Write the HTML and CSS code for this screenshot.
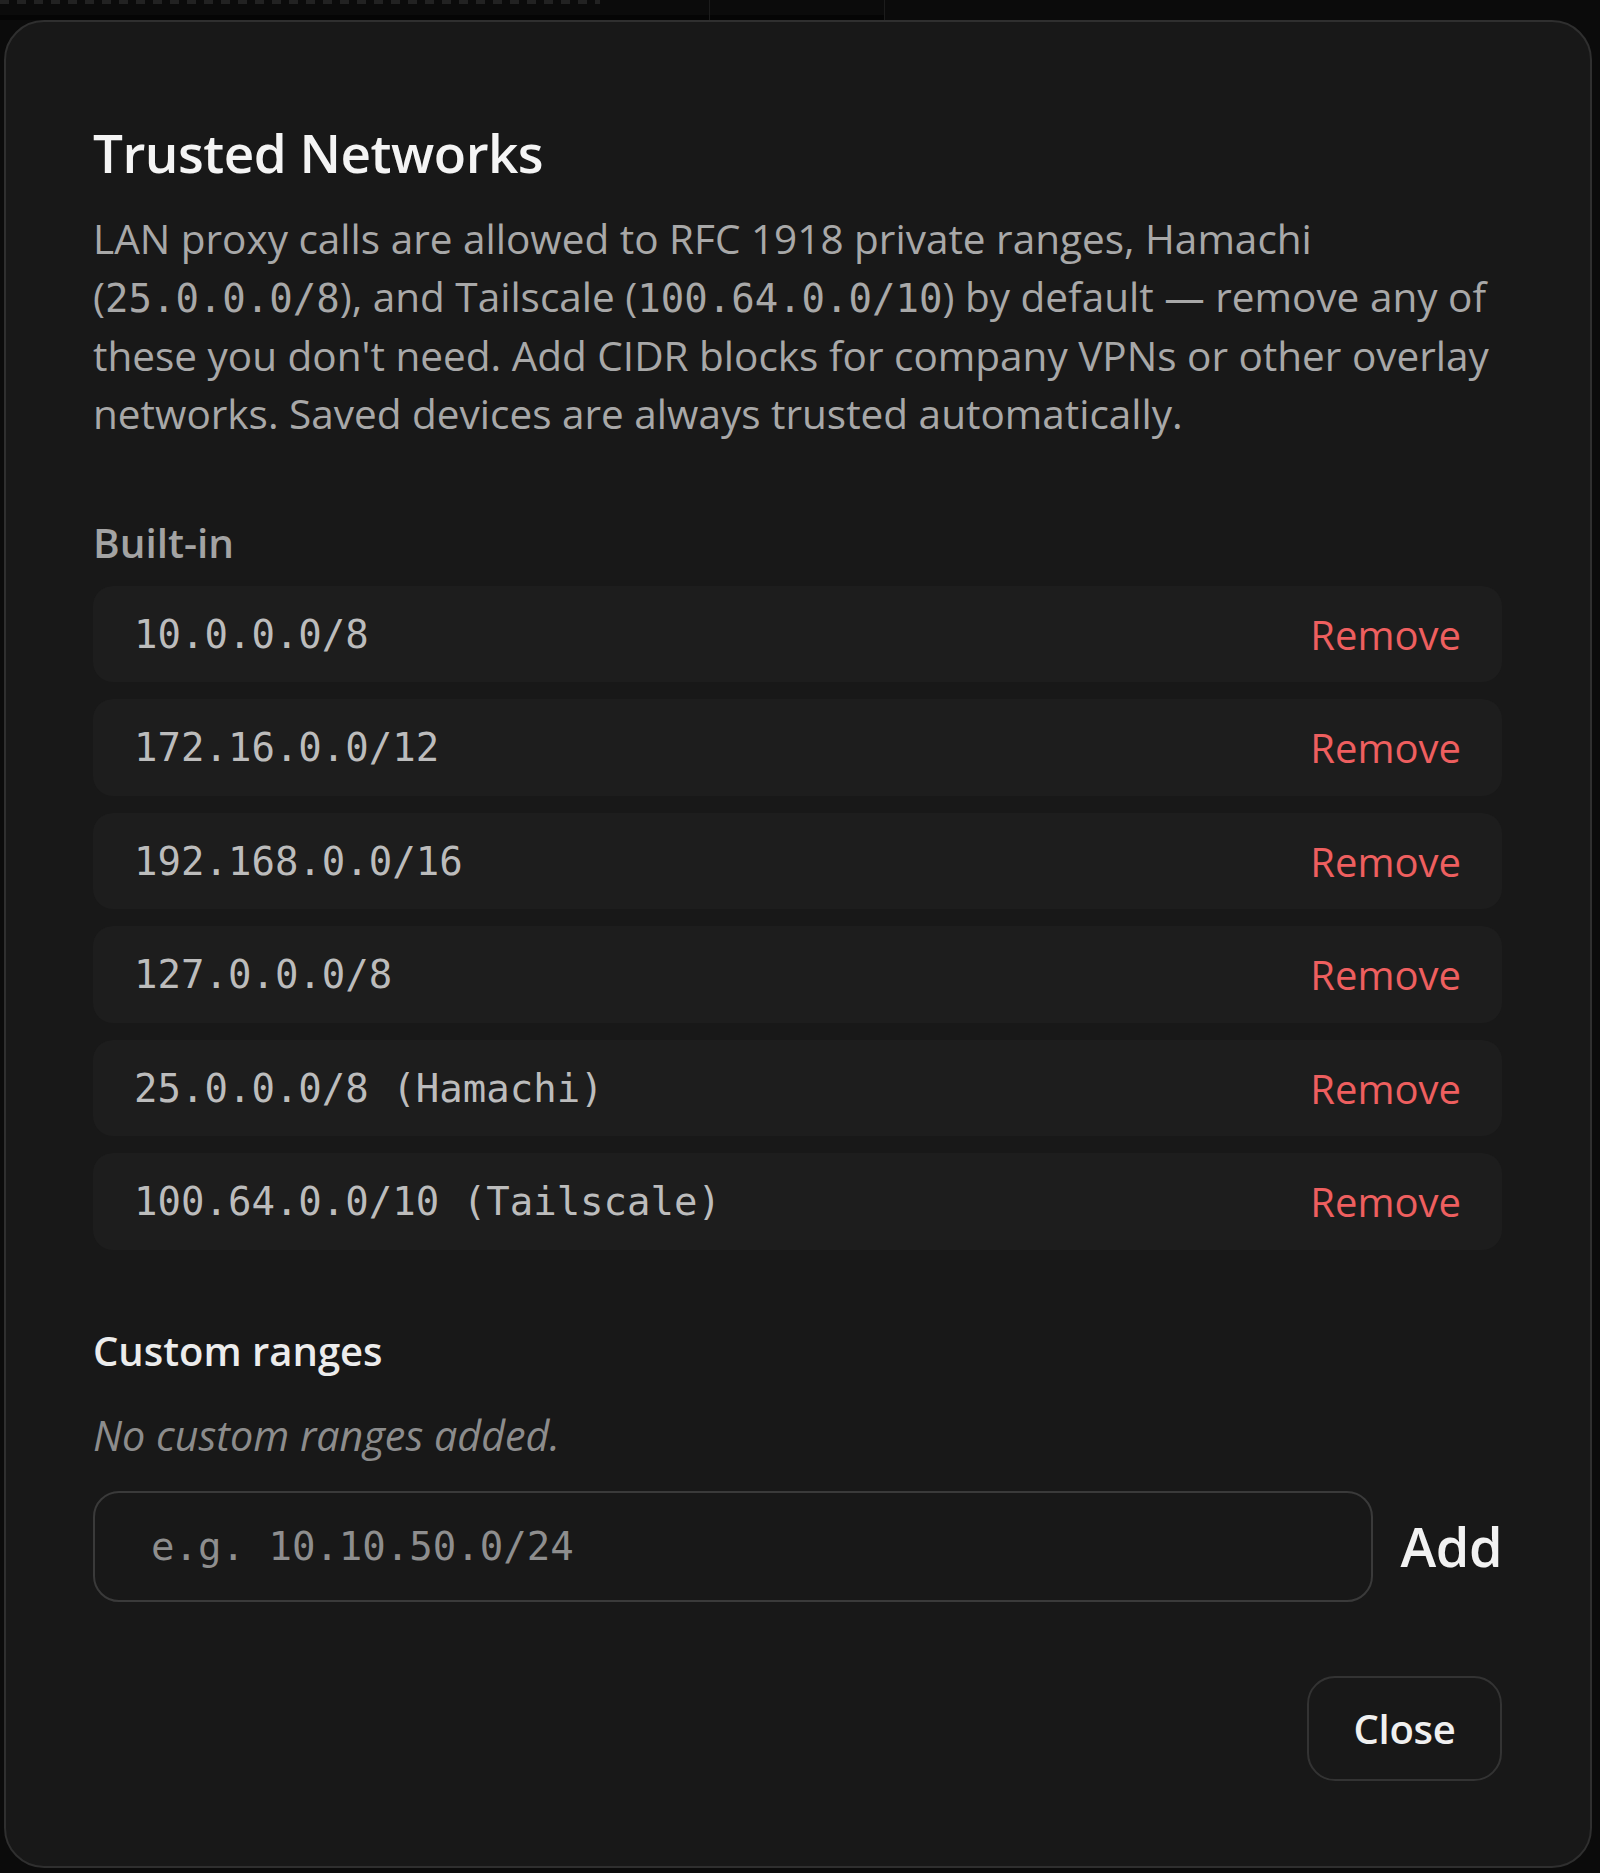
FILE: index.html
```html
<!DOCTYPE html>
<html lang="en">
<head>
<meta charset="utf-8">
<title>Trusted Networks</title>
<link rel="stylesheet" href="styles.css">
</head>
<body>
<div class="strip">
  <div class="strip-a"></div>
  <div class="strip-b"></div>
  <div class="strip-c"></div>
</div>
<div class="modal">
  <h2 class="title">Trusted Networks</h2>
  <p class="desc">LAN proxy calls are allowed to RFC 1918 private ranges, Hamachi (<code>25.0.0.0/8</code>), and Tailscale (<code>100.64.0.0/10</code>) by default — remove any of these you don't need. Add CIDR blocks for company VPNs or other overlay networks. Saved devices are always trusted automatically.</p>

  <div class="label">Built-in</div>
  <ul class="list">
    <li class="row"><span class="cidr">10.0.0.0/8</span><button class="remove">Remove</button></li>
    <li class="row"><span class="cidr">172.16.0.0/12</span><button class="remove">Remove</button></li>
    <li class="row"><span class="cidr">192.168.0.0/16</span><button class="remove">Remove</button></li>
    <li class="row"><span class="cidr">127.0.0.0/8</span><button class="remove">Remove</button></li>
    <li class="row"><span class="cidr">25.0.0.0/8 (Hamachi)</span><button class="remove">Remove</button></li>
    <li class="row"><span class="cidr">100.64.0.0/10 (Tailscale)</span><button class="remove">Remove</button></li>
  </ul>

  <div class="heading">Custom ranges</div>
  <p class="empty">No custom ranges added.</p>
  <div class="add-row">
    <input class="input" type="text" placeholder="e.g. 10.10.50.0/24">
    <button class="add">Add</button>
  </div>

  <div class="footer">
    <button class="close">Close</button>
  </div>
</div>
</body>
</html>
```

FILE: styles.css
```css
* { box-sizing: border-box; }

html, body {
  margin: 0;
  padding: 0;
  background: #0b0b0b;
}

body {
  width: 1600px;
  height: 1873px;
  overflow: hidden;
  font-family: "Open Sans", "Noto Sans", sans-serif;
}

.strip {
  display: flex;
  height: 20px;
}
.strip-a {
  width: 709px;
  background:
    repeating-linear-gradient(90deg, #222222 0 9px, transparent 9px 17px) 0 0 / 600px 4px no-repeat,
    linear-gradient(#0b0b0b 0 15px, #050505 15px);
}
.strip-b {
  width: 176px;
  border-left: 1px solid #1c1c1c;
  border-right: 1px solid #1c1c1c;
  background: linear-gradient(#0b0b0b 0 15px, #050505 15px);
}
.strip-c {
  flex: 1;
  background: #0b0b0b;
}

.modal {
  margin-left: 4px;
  width: 1588px;
  height: 1848px;
  background: #181818;
  border: 2px solid #2f2f2f;
  border-radius: 40px;
  padding: 99px 88px 86px 87px;
  display: flex;
  flex-direction: column;
}

.title {
  margin: 0;
  font-size: 53px;
  line-height: 63px;
  font-weight: 600;
  color: #f4f4f4;
  letter-spacing: -0.5px;
}

.desc {
  margin: 26px 0 0;
  font-size: 40.5px;
  line-height: 57.6px;
  font-weight: 500;
  color: #a8a8a8;
  letter-spacing: 0;
}
.desc code {
  font-family: "DejaVu Sans Mono", monospace;
  font-size: 39px;
  font-weight: 400;
}

.label {
  margin-top: 72.5px;
  font-size: 40.5px;
  line-height: 55px;
  font-weight: 600;
  color: #a3a3a3;
}

.list {
  list-style: none;
  margin: 16px 0 0;
  padding: 0;
  display: flex;
  flex-direction: column;
  gap: 17px;
}

.row {
  display: flex;
  align-items: center;
  justify-content: space-between;
  height: 96.5px;
  padding: 0 41px 0 41px;
  background: #1d1d1d;
  border-radius: 20px;
}

.cidr {
  font-family: "DejaVu Sans Mono", monospace;
  font-size: 39px;
  color: #bcbcbc;
}

.remove {
  background: none;
  border: 0;
  padding: 0;
  font-family: "Open Sans", "Noto Sans", sans-serif;
  font-size: 40px;
  font-weight: 500;
  color: #ee5f5f;
  cursor: pointer;
}

.heading {
  margin-top: 73px;
  font-size: 40px;
  line-height: 55px;
  font-weight: 600;
  color: #ececec;
}

.empty {
  margin: 30px 0 0;
  font-size: 41.3px;
  line-height: 55px;
  font-style: italic;
  font-weight: 500;
  color: #8c8c8c;
}

.add-row {
  margin-top: 28px;
  display: flex;
  align-items: center;
  gap: 28px;
}

.input {
  flex: 1;
  height: 111px;
  background: #181818;
  border: 2px solid #3a3a3a;
  border-radius: 26px;
  padding: 0 20px 0 56px;
  font-family: "DejaVu Sans Mono", monospace;
  font-size: 39px;
  color: #d0d0d0;
  outline: none;
}
.input::placeholder {
  color: #8e8e8e;
}

.add {
  background: none;
  border: 0;
  padding: 0;
  font-family: "Open Sans", "Noto Sans", sans-serif;
  font-size: 54px;
  font-weight: 600;
  color: #f2f2f2;
  letter-spacing: -0.5px;
}

.footer {
  margin-top: 74px;
  display: flex;
  justify-content: flex-end;
}

.close {
  width: 195px;
  height: 105px;
  background: #181818;
  border: 2px solid #333333;
  border-radius: 28px;
  font-family: "Open Sans", "Noto Sans", sans-serif;
  font-size: 40px;
  font-weight: 600;
  color: #f0f0f0;
  letter-spacing: -0.3px;
}
```
